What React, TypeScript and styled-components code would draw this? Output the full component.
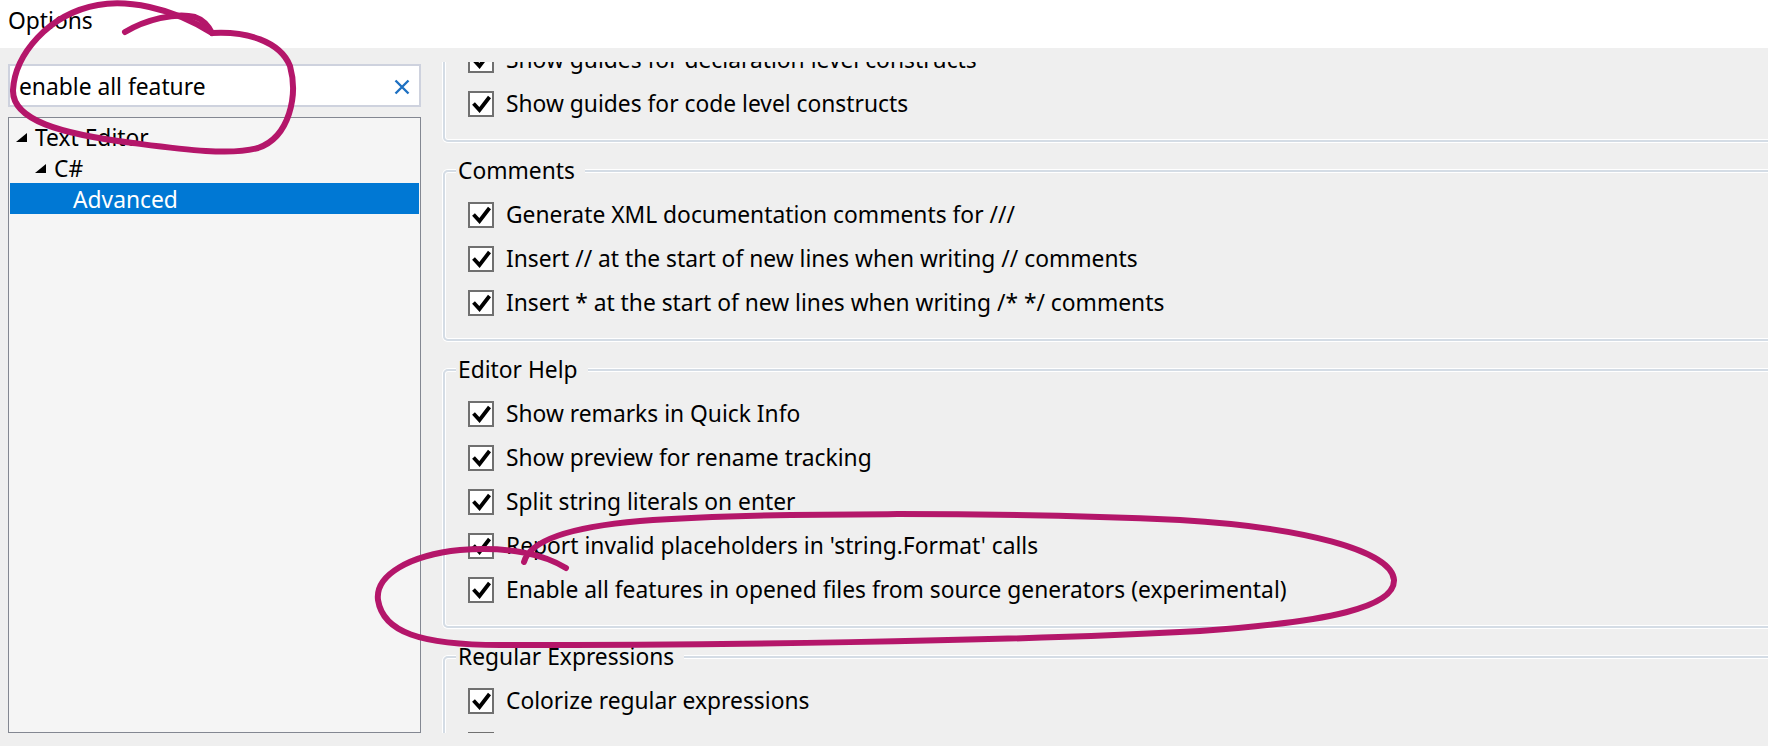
import React from 'react';
import styled, { createGlobalStyle } from 'styled-components';

const GlobalStyle = createGlobalStyle`
    html, body {
        margin: 0;
        padding: 0;
        overflow: hidden;
        background-color: rgb(239, 239, 239);
    }

    body {
        font-family: 'Noto Sans', 'Liberation Sans', sans-serif;
        color: rgb(0, 0, 0);
    }
`;

const Window = styled('div')`
    position: relative;
    width: 1768px;
    height: 746px;
    display: flex;
    flex-direction: column;
    background-color: rgb(239, 239, 239);
    overflow: hidden;
`;

const TitleBar = styled('div')`
    height: 48px;
    flex: none;
    box-sizing: border-box;
    padding: 6px 0 0 8px;
    background-color: rgb(255, 255, 255);
    font-size: 22.8px;
    line-height: 30px;
`;

const Body = styled('div')`
    flex: 1;
    min-height: 0;
    display: flex;
    gap: 20px;
    padding: 14px 0 13px 8px;
`;

const LeftPane = styled('div')`
    width: 413px;
    flex: none;
    display: flex;
    flex-direction: column;
    gap: 10px;
    padding-top: 2px;
`;

const SearchBox = styled('div')`
    height: 43px;
    box-sizing: border-box;
    display: flex;
    align-items: center;
    padding: 0 9px 0 9px;
    border: 2px solid rgb(206, 210, 222);
    background-color: rgb(255, 255, 255);
`;

const SearchText = styled('span')`
    flex: 1;
    padding-top: 3px;
    font-size: 22.8px;
    line-height: 30px;
`;

const ClearIcon = styled('svg')`
    width: 16px;
    height: 16px;
    margin-top: 2px;
    flex: none;
`;

const Tree = styled('div')`
    flex: 1;
    padding: 3px 1px;
    border: 1px solid rgb(131, 135, 145);
    background-color: rgb(245, 245, 245);
`;

const TreeRow = styled('div')<{ $level: number; $selected?: boolean }>`
    height: 31px;
    box-sizing: border-box;
    padding-top: 3px;
    display: flex;
    align-items: center;
    gap: 8px;
    padding-left: ${(props) => 6 + props.$level * 19}px;
    font-size: 22.8px;
    line-height: 28px;
    ${(props) => props.$selected && 'background-color: rgb(0, 120, 212); color: rgb(255, 255, 255);'}
`;

const Expander = styled('svg')`
    width: 11px;
    height: 11px;
    flex: none;
    margin-top: 1px;
`;

const RightPane = styled('div')`
    flex: 1;
    min-width: 0;
    overflow: hidden;
    padding-left: 2px;
`;

const ScrollContent = styled('div')`
    margin: -59px -40px 0 0;
`;

const Group = styled('fieldset')`
    margin: 0 0 16px 0;
    padding: 9px 0 14px 0;
    min-width: 0;
    border: 2px solid rgb(212, 220, 229);
    border-radius: 5px;
    box-shadow: 0 0 0 1px rgb(255, 255, 255), inset 0 0 0 1px rgb(255, 255, 255);
`;

const Legend = styled('legend')`
    margin-left: 11px;
    padding: 0 10px 0 2px;
    font-size: 22.8px;
    line-height: 26px;
    background-color: rgb(239, 239, 239);
`;

const Rows = styled('div')`
    padding-left: 23px;
`;

const OptionRow = styled('label')`
    height: 44px;
    display: flex;
    align-items: center;
    gap: 12px;
    font-size: 22.8px;
    line-height: 30px;
    white-space: nowrap;
`;

const CheckBox = styled('span')`
    width: 26px;
    height: 26px;
    flex: none;
    box-sizing: border-box;
    border: 2px solid rgb(112, 112, 112);
    background-color: rgb(255, 255, 255);
    display: flex;

    svg {
        width: 22px;
        height: 22px;
    }
`;

const Annotations = styled('svg')`
    position: absolute;
    left: 0;
    top: 0;
    width: 1768px;
    height: 746px;
    pointer-events: none;
`;

const groups = [
    {
        title: 'Block Structure Guides',
        options: ['Show guides for declaration level constructs', 'Show guides for code level constructs']
    },
    {
        title: 'Comments',
        options: [
            'Generate XML documentation comments for ///',
            'Insert // at the start of new lines when writing // comments',
            'Insert * at the start of new lines when writing /* */ comments'
        ]
    },
    {
        title: 'Editor Help',
        options: [
            'Show remarks in Quick Info',
            'Show preview for rename tracking',
            'Split string literals on enter',
            "Report invalid placeholders in 'string.Format' calls",
            'Enable all features in opened files from source generators (experimental)'
        ]
    },
    {
        title: 'Regular Expressions',
        options: ['Colorize regular expressions', 'Report invalid regular expressions']
    }
];

const treeItems = [
    { label: 'Text Editor', level: 0, expanded: true },
    { label: 'C#', level: 1, expanded: true },
    { label: 'Advanced', level: 2, selected: true }
];

const Check = () => (
    <CheckBox>
        <svg viewBox="0 0 22 22">
            <path d="M3.5 10.5 L9.5 17 L19.5 4" fill="none" stroke="rgb(0, 0, 0)" strokeWidth="3.8" />
        </svg>
    </CheckBox>
);

export default function App() {
    return (
        <Window>
            <GlobalStyle />
            <TitleBar>Options</TitleBar>
            <Body>
                <LeftPane>
                    <SearchBox>
                        <SearchText>enable all feature</SearchText>
                        <ClearIcon viewBox="0 0 16 16">
                            <path d="M1.5 1.5 L14.5 14.5 M14.5 1.5 L1.5 14.5" stroke="rgb(30, 113, 194)" strokeWidth="2.4" />
                        </ClearIcon>
                    </SearchBox>
                    <Tree>
                        {treeItems.map((item) => (
                            <TreeRow key={item.label} $level={item.level} $selected={item.selected}>
                                <Expander viewBox="0 0 11 11">
                                    {item.expanded && <polygon points="11,0 11,9 0,9" fill="rgb(0, 0, 0)" />}
                                </Expander>
                                {item.label}
                            </TreeRow>
                        ))}
                    </Tree>
                </LeftPane>
                <RightPane>
                    <ScrollContent>
                        {groups.map((group) => (
                            <Group key={group.title}>
                                <Legend>{group.title}</Legend>
                                <Rows>
                                    {group.options.map((option) => (
                                        <OptionRow key={option}>
                                            <Check />
                                            {option}
                                        </OptionRow>
                                    ))}
                                </Rows>
                            </Group>
                        ))}
                    </ScrollContent>
                </RightPane>
            </Body>
            <Annotations viewBox="0 0 1768 746">
                <g fill="none" stroke="rgb(180, 22, 106)" strokeWidth="6" strokeLinecap="round" strokeLinejoin="round">
                    <path d="M125 32 C145 20 175 12 195 17 C204 20 209 27 212 33" />
                    <path d="M212 33 C170 6 125 0 98 5 C48 14 15 55 13 90 C12 120 60 134 133 143 C180 149 230 156 258 148 C290 137 298 95 290 66 C280 41 246 31 212 33" />
                    <path d="M524 562 C530 540 570 527 640 521 C760 512 1000 512 1180 520 C1300 527 1392 550 1394 580 C1395 607 1330 622 1200 631 C1000 642 700 645 500 645 C420 645 383 632 378 600 C375 575 410 555 460 550 C510 546 545 555 566 568" />
                </g>
            </Annotations>
        </Window>
    );
}
